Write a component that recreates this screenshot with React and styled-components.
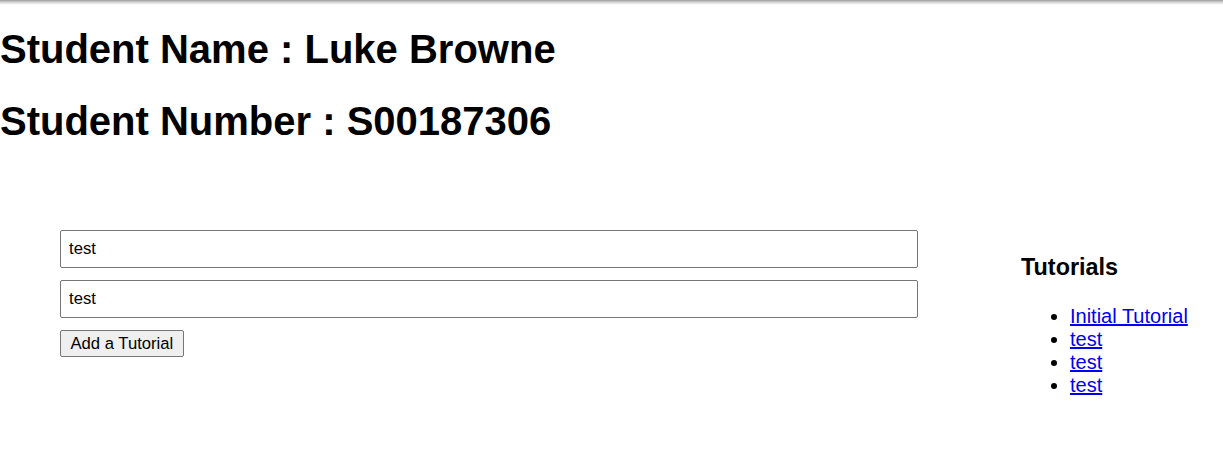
import React from "react";
import styled, { createGlobalStyle } from "styled-components";

const GlobalStyle = createGlobalStyle`
  html, body {
    margin: 0;
    padding: 0;
  }
  body {
    font-family: "Liberation Sans", Arial, sans-serif;
    font-size: 20px;
    color: #000;
    background: linear-gradient(to bottom, #9a9a9a 0px, #cfcfcf 2px, #f2f2f2 4px, #ffffff 5px) no-repeat;
    background-color: #fff;
    min-height: 455px;
  }
`;

const Page = styled.div`
  display: block;
  padding-top: 0.1px;
`;

const Title = styled.h1`
  font-size: 40px;
  font-weight: bold;
  line-height: normal;
  margin: 26.8px 0;
`;

const Main = styled.main`
  display: flex;
  align-items: flex-start;
  padding: 59.6px 0 0 60px;
`;

const Form = styled.form`
  width: 858px;
  display: flex;
  flex-direction: column;
  align-items: flex-start;
  gap: 12px;
`;

const TextInput = styled.input`
  box-sizing: border-box;
  width: 100%;
  height: 38px;
  padding: 0 8px;
  border: 1px solid #767676;
  border-radius: 2px;
  font-family: "Liberation Sans", Arial, sans-serif;
  font-size: 16.67px;
  color: #000;
  background: #fff;
  outline: none;
`;

const Button = styled.button`
  box-sizing: border-box;
  height: 27px;
  padding: 0 9.5px;
  border: 1px solid #767676;
  border-radius: 2px;
  background: #efefef;
  font-family: "Liberation Sans", Arial, sans-serif;
  font-size: 16.67px;
  color: #000;
  cursor: pointer;
`;

const Sidebar = styled.aside`
  margin-left: 103px;
  display: flex;
  flex-direction: column;
`;

const SideTitle = styled.h3`
  font-size: 23.4px;
  font-weight: bold;
  line-height: normal;
  margin: 24.4px 0 23.4px;
`;

const List = styled.ul`
  margin: 0;
  padding-left: 49px;
  list-style: disc;
`;

const Item = styled.li`
  font-size: 20px;
  line-height: normal;
`;

const Link = styled.a`
  color: #0000ee;
  text-decoration: underline;
`;

const tutorials = ["Initial Tutorial", "test", "test", "test"];

export default function App() {
  return (
    <>
      <GlobalStyle />
      <Page>
        <Title>Student Name : Luke Browne</Title>
        <Title>Student Number : S00187306</Title>
        <Main>
          <Form onSubmit={(e) => e.preventDefault()}>
            <TextInput type="text" defaultValue="test" />
            <TextInput type="text" defaultValue="test" />
            <Button type="submit">Add a Tutorial</Button>
          </Form>
          <Sidebar>
            <SideTitle>Tutorials</SideTitle>
            <List>
              {tutorials.map((t, i) => (
                <Item key={i}>
                  <Link href="#">{t}</Link>
                </Item>
              ))}
            </List>
          </Sidebar>
        </Main>
      </Page>
    </>
  );
}
